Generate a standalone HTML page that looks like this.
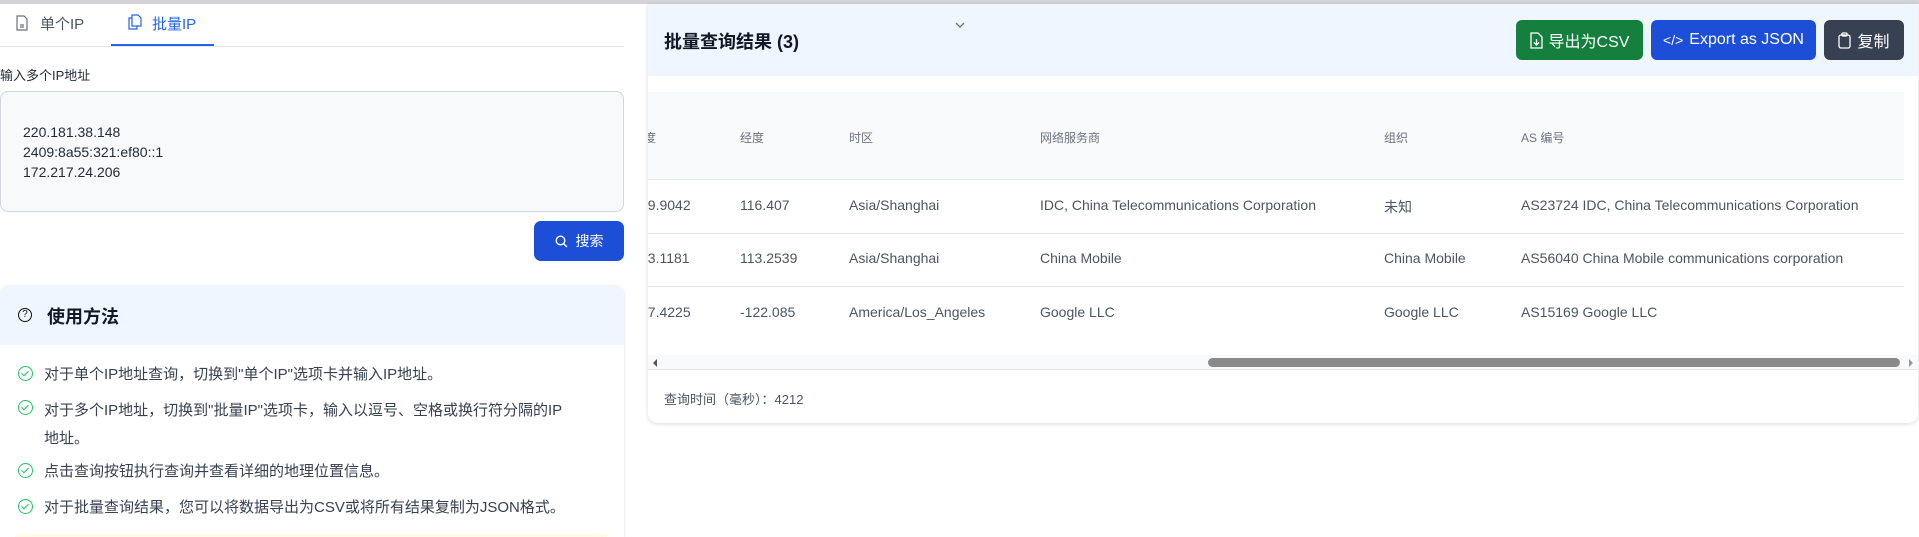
<!DOCTYPE html>
<html><head><meta charset="utf-8"><style>
*{box-sizing:border-box;margin:0;padding:0}
html,body{width:1919px;height:537px;overflow:hidden}
body{position:relative;background:#fff;font-family:"Liberation Sans","Noto Sans CJK SC",sans-serif;color:#374151}
.a{position:absolute;white-space:nowrap}
.th{font-size:12px;color:#6b7280}
.td{font-size:14px;color:#4b5563}
.btn{position:absolute;top:20px;height:40px;border-radius:6px;color:#fff;font-size:16px;display:flex;align-items:center;justify-content:center;gap:6px}
.li{position:absolute;left:44px;font-size:15px;color:#374151}
.ck{position:absolute;left:18px;width:15px;height:15px;border:1.5px solid #22c55e;border-radius:50%}
.ck:after{content:"";position:absolute;left:4px;top:2px;width:3px;height:6px;border:solid #22c55e;border-width:0 1.5px 1.5px 0;transform:rotate(45deg)}
</style></head><body>
<div class="a" style="left:0;top:0;width:1919px;height:4px;background:#d4d4d8"></div>
<svg class="a" style="left:16px;top:15px" width="12" height="16" viewBox="0 0 12 16" fill="none" stroke="#6b7280" stroke-width="1.2"><path d="M1 1h7l3 3v11H1z"/><path d="M4 10h4M4 12h4"/></svg>
<div class="a" style="left:40px;top:13px;font-size:15px;color:#4b5563">单个IP</div>
<svg class="a" style="left:128px;top:14px" width="14" height="16" viewBox="0 0 14 16" fill="none" stroke="#2563eb" stroke-width="1.2"><path d="M4 1h6l3 3v8H4z"/><path d="M4 4H1v11h8v-3"/></svg>
<div class="a" style="left:152px;top:13px;font-size:15px;color:#2563eb">批量IP</div>
<div class="a" style="left:0;top:46px;width:624px;height:1px;background:#e5e7eb"></div>
<div class="a" style="left:111px;top:44px;width:103px;height:2px;background:#2563eb"></div>
<div class="a" style="left:0;top:65px;font-size:13px;color:#1f2937">输入多个IP地址</div>
<div class="a" style="left:0;top:91px;width:624px;height:121px;background:#f8f9fb;border:1px solid #d1d5db;border-radius:8px"></div>
<div class="a" style="left:23px;top:122px;font-size:14px;line-height:20px;color:#1f2937">220.181.38.148<br>2409:8a55:321:ef80::1<br>172.217.24.206</div>
<div class="a" style="left:534px;top:221px;width:90px;height:40px;background:#1d4ed8;border-radius:7px;color:#fff;font-size:14px;display:flex;align-items:center;justify-content:center;gap:8px"><svg width="13" height="13" viewBox="0 0 13 13" fill="none" stroke="#fff" stroke-width="1.4"><circle cx="5.5" cy="5.5" r="4.3"/><path d="M8.7 8.7L12 12"/></svg>搜索</div>
<div class="a" style="left:0;top:285px;width:624px;height:252px;border-radius:10px 10px 0 0;background:#fff;box-shadow:0 1px 3px rgba(0,0,0,.12)"></div>
<div class="a" style="left:0;top:285px;width:624px;height:60px;border-radius:10px 10px 0 0;background:#eff6ff"></div>
<div class="a" style="left:18px;top:308px;width:14px;height:14px;border:1.3px solid #111;border-radius:50%;font-size:10px;line-height:12px;text-align:center;color:#111">?</div>
<div class="a" style="left:47px;top:303px;font-size:18px;font-weight:bold;color:#111827">使用方法</div>
<div class="ck" style="top:366px"></div><div class="li" style="top:363px">对于单个IP地址查询，切换到"单个IP"选项卡并输入IP地址。</div>
<div class="ck" style="top:400px"></div><div class="li" style="top:397px;line-height:28px">对于多个IP地址，切换到"批量IP"选项卡，输入以逗号、空格或换行符分隔的IP<br>地址。</div>
<div class="ck" style="top:463px"></div><div class="li" style="top:460px">点击查询按钮执行查询并查看详细的地理位置信息。</div>
<div class="ck" style="top:499px"></div><div class="li" style="top:496px">对于批量查询结果，您可以将数据导出为CSV或将所有结果复制为JSON格式。</div>
<div class="a" style="left:15px;top:534px;width:592px;height:3px;background:#fefce8"></div>
<div class="a" style="left:648px;top:4px;width:1270px;height:419px;background:#fff;border-radius:0 0 10px 10px;box-shadow:0 1px 4px rgba(0,0,0,.15)"></div>
<div class="a" style="left:648px;top:4px;width:1270px;height:72px;background:#eff6ff"></div>
<div class="a" style="left:664px;top:28px;font-size:18px;font-weight:bold;color:#111827">批量查询结果 (3)</div>
<svg class="a" style="left:954px;top:21px" width="12" height="8" viewBox="0 0 12 8" fill="none" stroke="#6b7280" stroke-width="1.3"><path d="M2 2l4 4 4-4"/></svg>
<div class="btn" style="left:1516px;width:127px;background:#15803d"><svg width="13" height="17" viewBox="0 0 13 17" fill="none" stroke="#fff" stroke-width="1.3"><path d="M1 1h7l4 4v11H1z"/><path d="M6.5 7v6M4 10.5l2.5 2.5 2.5-2.5"/></svg>导出为CSV</div>
<div class="btn" style="left:1651px;width:165px;background:#1d4ed8"><span style="font-size:14px">&lt;/&gt;</span>Export as JSON</div>
<div class="btn" style="left:1824px;width:80px;background:#374151"><svg width="13" height="17" viewBox="0 0 13 17" fill="none" stroke="#fff" stroke-width="1.3"><rect x="1" y="3" width="11" height="13" rx="2"/><rect x="4" y="1" width="5" height="3" rx="1"/></svg>复制</div>
<div class="a" style="left:648px;top:92px;width:1256px;height:88px;background:#f9fafb;border-bottom:1px solid #e5e7eb"></div>
<div class="a" style="left:648px;top:233px;width:1256px;height:1px;background:#e5e7eb"></div>
<div class="a" style="left:648px;top:286px;width:1256px;height:1px;background:#e5e7eb"></div>
<div class="a" style="left:648px;top:92px;width:90px;height:240px;overflow:hidden">
 <div class="a th" style="left:-16px;top:37px">纬度</div>
 <div class="a td" style="left:-8px;top:105px">39.9042</div>
 <div class="a td" style="left:-8px;top:158px">23.1181</div>
 <div class="a td" style="left:-8px;top:212px">37.4225</div>
</div>
<div class="a th" style="left:740px;top:129px">经度</div>
<div class="a th" style="left:849px;top:129px">时区</div>
<div class="a th" style="left:1040px;top:129px">网络服务商</div>
<div class="a th" style="left:1384px;top:129px">组织</div>
<div class="a th" style="left:1521px;top:129px">AS 编号</div>
<div class="a td" style="left:740px;top:197px">116.407</div>
<div class="a td" style="left:849px;top:197px">Asia/Shanghai</div>
<div class="a td" style="left:1040px;top:197px">IDC, China Telecommunications Corporation</div>
<div class="a td" style="left:1384px;top:197px">未知</div>
<div class="a td" style="left:1521px;top:197px">AS23724 IDC, China Telecommunications Corporation</div>
<div class="a td" style="left:740px;top:250px">113.2539</div>
<div class="a td" style="left:849px;top:250px">Asia/Shanghai</div>
<div class="a td" style="left:1040px;top:250px">China Mobile</div>
<div class="a td" style="left:1384px;top:250px">China Mobile</div>
<div class="a td" style="left:1521px;top:250px">AS56040 China Mobile communications corporation</div>
<div class="a td" style="left:740px;top:304px">-122.085</div>
<div class="a td" style="left:849px;top:304px">America/Los_Angeles</div>
<div class="a td" style="left:1040px;top:304px">Google LLC</div>
<div class="a td" style="left:1384px;top:304px">Google LLC</div>
<div class="a td" style="left:1521px;top:304px">AS15169 Google LLC</div>
<div class="a" style="left:648px;top:355px;width:1270px;height:15px;background:#f9fafb;border-bottom:1px solid #e5e7eb"></div>
<div class="a" style="left:653px;top:359px;width:0;height:0;border:4px solid transparent;border-right:4px solid #555;border-left:0"></div>
<div class="a" style="left:1909px;top:359px;width:0;height:0;border:4px solid transparent;border-left:4px solid #999;border-right:0"></div>
<div class="a" style="left:1208px;top:358px;width:692px;height:9px;background:#8a8a8a;border-radius:5px"></div>
<div class="a" style="left:664px;top:389px;font-size:13px;color:#4b5563">查询时间（毫秒）：4212</div>
</body></html>
